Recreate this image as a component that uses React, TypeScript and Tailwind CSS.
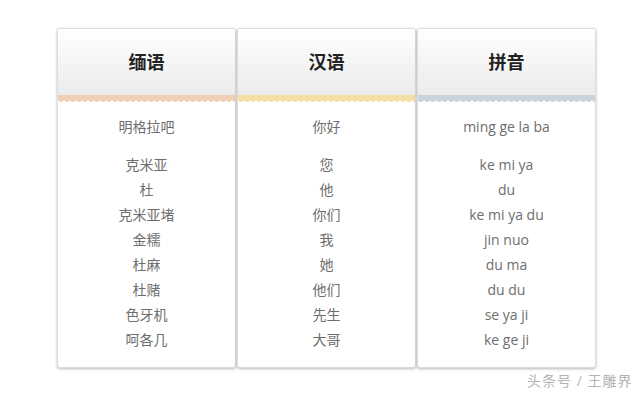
const columns = [
  {
    title: '缅语',
    wave: '#f0cfb4',
    first: '明格拉吧',
    rows: ['克米亚', '杜', '克米亚堵', '金糯', '杜麻', '杜赌', '色牙机', '呵各几'],
  },
  {
    title: '汉语',
    wave: '#f4dfa4',
    first: '你好',
    rows: ['您', '他', '你们', '我', '她', '他们', '先生', '大哥'],
  },
  {
    title: '拼音',
    wave: '#c9d3da',
    first: 'ming ge la ba',
    rows: ['ke mi ya', 'du', 'ke mi ya du', 'jin nuo', 'du ma', 'du du', 'se ya ji', 'ke ge ji'],
  },
]

function Wave({ color, id }: { color: string; id: string }) {
  return (
    <svg width="100%" height="7" className="block">
      <defs>
        <pattern id={id} width="6" height="7" patternUnits="userSpaceOnUse">
          <rect x="0" y="0" width="6" height="3" fill={color} />
          <path d="M0 3 L6 3 L6 4 A3 3 0 0 1 3 7 A3 3 0 0 1 0 4 Z" fill={color} />
        </pattern>
      </defs>
      <rect width="100%" height="7" fill={`url(#${id})`} />
    </svg>
  )
}

export default function App() {
  return (
    <div
      className="relative w-[640px] h-[393px] bg-white overflow-hidden"
      style={{ fontFamily: '"Open Sans", "Noto Sans CJK SC", sans-serif' }}
    >
      <div className="flex gap-[1px] pl-[57px] pt-[28px]">
        {columns.map((col, i) => (
          <div
            key={col.title}
            className="w-[179px] h-[340px] flex flex-col border border-[#dcdcdc] rounded-[3px] bg-white shadow-[0_1px_3px_rgba(0,0,0,0.28)] overflow-hidden"
          >
            <div className="h-[66px] flex items-center justify-center bg-gradient-to-b from-white to-[#ebebeb]">
              <span className="text-[18px] font-bold text-[#222]">{col.title}</span>
            </div>
            <Wave color={col.wave} id={`wave-${i}`} />
            <div className="flex flex-col items-center pt-[12px] text-[14px] leading-[25px] text-[#6e6e6e]">
              <div>{col.first}</div>
              <div className="h-[13px]" />
              {col.rows.map((r) => (
                <div key={r}>{r}</div>
              ))}
            </div>
          </div>
        ))}
      </div>
      <div className="absolute left-[527px] top-[370px] text-[14px] text-[#b4b4b4] tracking-[1px]">
        头条号 / 王雕界
      </div>
    </div>
  )
}
